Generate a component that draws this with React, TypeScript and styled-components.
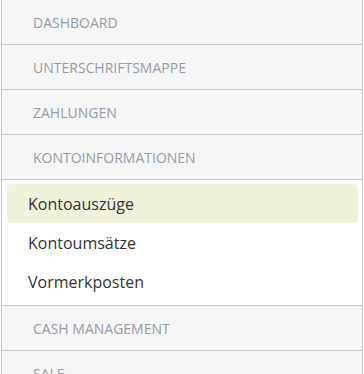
import styled, { createGlobalStyle } from "styled-components";

const GlobalStyle = createGlobalStyle`
  body {
    margin: 0;
    background: #ffffff;
    font-family: "Open Sans", "Liberation Sans", sans-serif;
  }
`;

const sections = [
  { title: "Dashboard" },
  { title: "Unterschriftsmappe" },
  { title: "Zahlungen" },
  {
    title: "Kontoinformationen",
    items: ["Kontoauszüge", "Kontoumsätze", "Vormerkposten"],
    active: 0,
  },
  { title: "Cash Management" },
  { title: "Sale" },
];

const App = () => {
  return (
    <>
      <GlobalStyle />
      <SideNav>
        {sections.map((section) => (
          <Section key={section.title}>
            <SectionHeader>{section.title}</SectionHeader>
            {section.items && (
              <SubMenu>
                {section.items.map((item, i) => (
                  <SubItem key={item} $active={i === section.active}>
                    {item}
                  </SubItem>
                ))}
              </SubMenu>
            )}
          </Section>
        ))}
      </SideNav>
    </>
  );
};

export default App;

const SideNav = styled.nav`
  width: 362px;
  height: 374px;
  margin-left: 1px;
  box-sizing: border-box;
  border-left: 1px solid #c9c9c9;
  border-right: 1px solid #c9c9c9;
  overflow: hidden;
  background: #f6f6f6;
`;

const Section = styled.div`
  display: flex;
  flex-direction: column;
  border-bottom: 1px solid #c9c9c9;
`;

const SectionHeader = styled.div`
  height: 44px;
  display: flex;
  align-items: center;
  padding-left: 31px;
  font-size: 14px;
  text-transform: uppercase;
  color: #979ca6;
  background: #f6f6f6;
`;

const SubMenu = styled.ul`
  margin: 0;
  padding: 4px 4px 4px 5px;
  list-style: none;
  background: #ffffff;
  border-top: 1px solid #c9c9c9;
  display: flex;
  flex-direction: column;
`;

const SubItem = styled.li<{ $active?: boolean }>`
  height: 39px;
  display: flex;
  align-items: center;
  padding-left: 21px;
  font-size: 16px;
  color: #333333;
  border-radius: 4px;
  background: ${(p) => (p.$active ? "#f1f2dc" : "transparent")};
`;
